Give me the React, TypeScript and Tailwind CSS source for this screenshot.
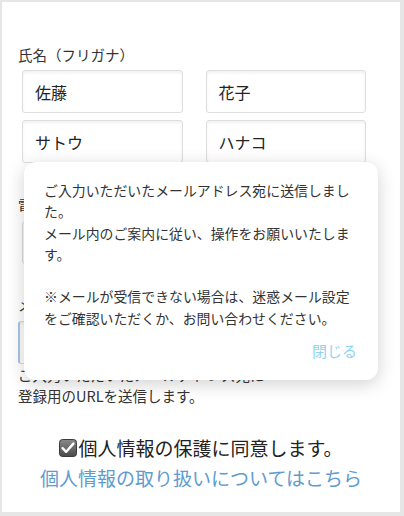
import React from "react";

const font = { fontFamily: '"Noto Sans CJK JP", "Noto Sans", sans-serif' };

function Field({ value, focused }: { value?: string; focused?: boolean }) {
  return (
    <div
      className={`h-[43px] flex items-center px-3 rounded-[3px] border bg-white shadow-[inset_0_2px_3px_rgba(0,0,0,0.06)] text-[16px] text-[#222] ${
        focused ? "border-[#dcdcdc] border-l-[#a9c6e6] border-l-2" : "border-[#dedede]"
      }`}
    >
      {value}
    </div>
  );
}

function CheckIcon() {
  return (
    <svg width="18" height="18" viewBox="0 0 18 18" className="shrink-0">
      <defs>
        <linearGradient id="cb" x1="0" y1="0" x2="0" y2="1">
          <stop offset="0" stopColor="#8a8a8a" />
          <stop offset="1" stopColor="#4a4a4a" />
        </linearGradient>
      </defs>
      <rect x="0.5" y="0.5" width="17" height="17" rx="3" fill="url(#cb)" stroke="#3a3a3a" />
      <path d="M3.6 9.2 L7.2 12.8 L14.4 4.6" fill="none" stroke="#fff" strokeWidth="2.4" strokeLinecap="round" strokeLinejoin="round" />
    </svg>
  );
}

export default function App() {
  return (
    <div className="w-[404px] h-[516px] bg-[#e6e6e6] pl-[2px] pt-[2px] pr-[4px] pb-[4px]" style={font}>
      <div className="relative w-full h-full bg-white overflow-hidden">
        <div className="pl-[16px] pr-[34px] pt-[43px] text-[#333]">
          <p className="text-[14.5px] leading-[20px]">氏名（フリガナ）</p>
          <div className="mt-[5px] pl-[4px] grid grid-cols-2 gap-x-[23px] gap-y-[7px]">
            <Field value="佐藤" />
            <Field value="花子" />
            <Field value="サトウ" />
            <Field value="ハナコ" />
          </div>
          <p className="mt-[32px] text-[14.5px] leading-[20px]">電話番号</p>
          <div className="mt-[6px] pl-[4px]">
            <Field />
          </div>
          <p className="mt-[31px] text-[14.5px] leading-[20px]">メールアドレス</p>
          <div className="mt-[6px]">
            <Field focused />
          </div>
          <p className="mt-0 text-[14.5px] leading-[21px]">
            ご入力いただいたメールアドレス宛に
            <br />
            登録用のURLを送信します。
          </p>
          <div className="mt-[28px] -mr-[18px] flex items-center justify-center gap-[1px] text-[19px] leading-[28px] text-[#222]">
            <CheckIcon />
            <span>個人情報の保護に同意します。</span>
          </div>
          <p className="mt-[2px] -mr-[18px] text-center text-[19px] leading-[28px] text-[#5e9bcf]">
            個人情報の取り扱いについてはこちら
          </p>
        </div>

        <div className="absolute left-[22px] top-[160px] w-[354px] rounded-[12px] bg-white shadow-[0_4px_18px_rgba(0,0,0,0.18)] pl-[20px] pr-[18px] pt-[18px] pb-[19px]">
          <p className="text-[13.9px] leading-[21.3px] text-[#333]">
            ご入力いただいたメールアドレス宛に送信しました。
            <br />
            メール内のご案内に従い、操作をお願いいたします。
            <br />
            <br />
            ※メールが受信できない場合は、迷惑メール設定をご確認いただくか、お問い合わせください。
          </p>
          <div className="mt-[12px] flex justify-end pr-[3px]">
            <span className="text-[15px] leading-[20px] text-[#8fd4f2]">閉じる</span>
          </div>
        </div>
      </div>
    </div>
  );
}
